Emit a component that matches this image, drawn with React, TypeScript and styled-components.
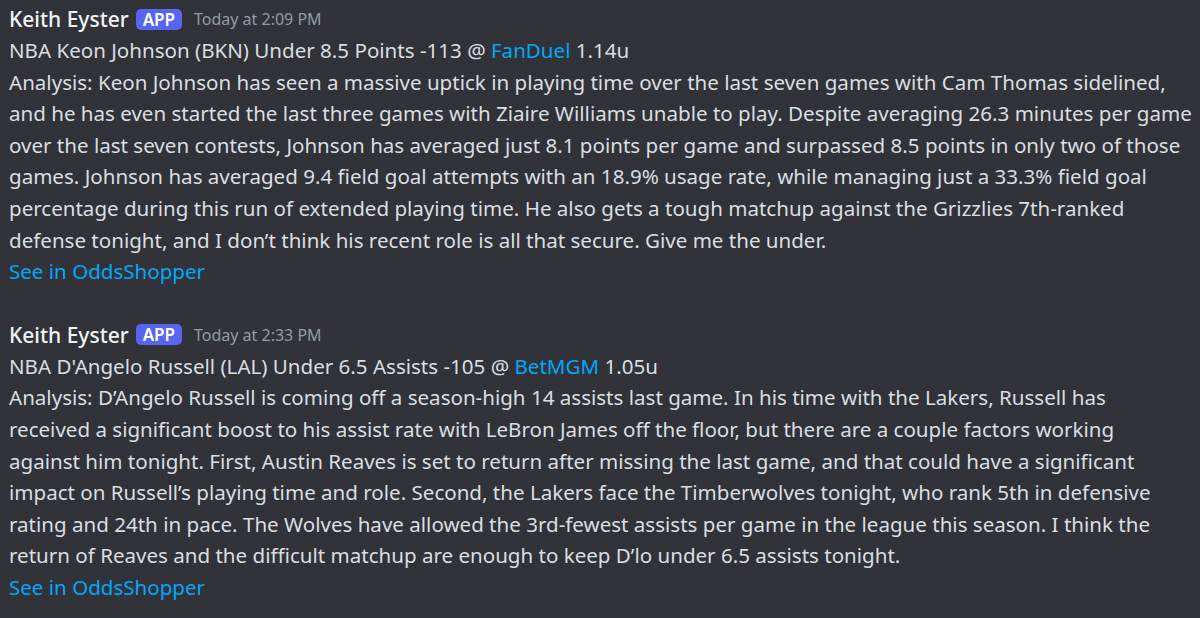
import React from 'react'
import styled, { createGlobalStyle } from 'styled-components'

const GlobalStyle = createGlobalStyle`
	html, body {
		margin: 0;
		padding: 0;
		background: #313338;
		overflow: hidden;
	}
`

type Post = {
	time: string
	pick: string
	book: string
	units: string
	lines: string[]
}

const POSTS: Post[] = [
	{
		time: 'Today at 2:09 PM',
		pick: 'NBA Keon Johnson (BKN) Under 8.5 Points -113 @ ',
		book: 'FanDuel',
		units: ' 1.14u',
		lines: [
			'Analysis: Keon Johnson has seen a massive uptick in playing time over the last seven games with Cam Thomas sidelined,',
			'and he has even started the last three games with Ziaire Williams unable to play. Despite averaging 26.3 minutes per game',
			'over the last seven contests, Johnson has averaged just 8.1 points per game and surpassed 8.5 points in only two of those',
			'games. Johnson has averaged 9.4 field goal attempts with an 18.9% usage rate, while managing just a 33.3% field goal',
			'percentage during this run of extended playing time. He also gets a tough matchup against the Grizzlies 7th-ranked',
			'defense tonight, and I don\u2019t think his recent role is all that secure. Give me the under.'
		]
	},
	{
		time: 'Today at 2:33 PM',
		pick: 'NBA D\'Angelo Russell (LAL) Under 6.5 Assists -105 @ ',
		book: 'BetMGM',
		units: ' 1.05u',
		lines: [
			'Analysis: D\u2019Angelo Russell is coming off a season-high 14 assists last game. In his time with the Lakers, Russell has',
			'received a significant boost to his assist rate with LeBron James off the floor, but there are a couple factors working',
			'against him tonight. First, Austin Reaves is set to return after missing the last game, and that could have a significant',
			'impact on Russell\u2019s playing time and role. Second, the Lakers face the Timberwolves tonight, who rank 5th in defensive',
			'rating and 24th in pace. The Wolves have allowed the 3rd-fewest assists per game in the league this season. I think the',
			'return of Reaves and the difficult matchup are enough to keep D\u2019lo under 6.5 assists tonight.'
		]
	}
]

const Feed = styled.div`
	display: flex;
	flex-direction: column;
	gap: 31px;
	padding: 3px 0 0 9px;
	font-family: 'Noto Sans', 'Open Sans', sans-serif;
`

const Message = styled.div`
	display: flex;
	flex-direction: column;
`

const Header = styled.div`
	display: flex;
	align-items: center;
	height: 32px;
`

const Username = styled.span`
	font-size: 21px;
	font-weight: 500;
	color: #f2f3f5;
	margin-right: 7px;
`

const Badge = styled.span`
	display: inline-flex;
	align-items: center;
	justify-content: center;
	height: 21px;
	padding: 0 7px;
	border-radius: 5px;
	background: #5865f2;
	color: #ffffff;
	font-size: 17px;
	font-weight: 600;
	margin-right: 12px;
`

const Timestamp = styled.span`
	font-size: 16px;
	color: #949ba4;
`

const Body = styled.div`
	font-size: 20.55px;
	line-height: 31.6px;
	color: #dbdee1;
	white-space: nowrap;
`

const Link = styled.a`
	color: #00a8fc;
	text-decoration: none;
`

export default function App() {
	return (
		<>
			<GlobalStyle />
			<Feed>
				{POSTS.map((post) => (
					<Message key={post.time}>
						<Header>
							<Username>Keith Eyster</Username>
							<Badge>APP</Badge>
							<Timestamp>{post.time}</Timestamp>
						</Header>
						<Body>
							{post.pick}<Link href="#">{post.book}</Link>{post.units}
							{post.lines.map((line) => (
								<React.Fragment key={line}><br />{line}</React.Fragment>
							))}
							<br /><Link href="#">See in OddsShopper</Link>
						</Body>
					</Message>
				))}
			</Feed>
		</>
	)
}
